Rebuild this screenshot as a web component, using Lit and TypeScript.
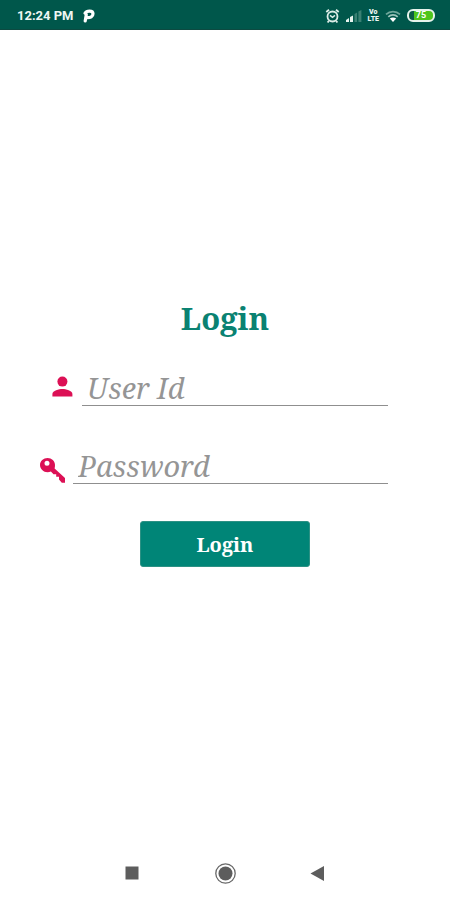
import { LitElement, html, css } from "lit";
import { customElement } from "lit/decorators.js";

@customElement("app-status-bar")
class AppStatusBar extends LitElement {
  static styles = css`
    :host {
      display: flex;
      align-items: center;
      justify-content: space-between;
      height: 30px;
      padding: 2px 15px 0 17px;
      box-sizing: border-box;
      background: #00574b;
      color: #eef6f3;
      font-family: Roboto, sans-serif;
      border-bottom: 1px solid #0c4a41;
    }
    .group {
      display: flex;
      align-items: center;
    }
    .left {
      gap: 8px;
    }
    .right {
      gap: 6px;
    }
    .time {
      font-size: 13px;
      font-weight: 700;
      line-height: 16px;
    }
    .volte {
      display: flex;
      flex-direction: column;
      align-items: center;
      font-size: 7px;
      font-weight: 900;
      line-height: 7px;
    }
    svg {
      display: block;
    }
    .battery {
      display: flex;
      align-items: center;
      justify-content: center;
      width: 28px;
      height: 13px;
      box-sizing: border-box;
      border: 2px solid #e6f3ec;
      border-radius: 6px;
      background: linear-gradient(90deg, #0c5b45 22%, #4fc51c 22%);
      color: #fff;
      font-size: 9px;
      font-weight: 700;
      line-height: 9px;
    }
  `;

  render() {
    return html`
      <div class="group left">
        <span class="time">12:24 PM</span>
        <svg width="14" height="16" viewBox="0 0 14 16" fill="none" stroke="#fff" aria-hidden="true">
          <path d="M3.200 13 4.300 6.500" stroke-width="3.200" stroke-linecap="round" />
          <path d="M3 5.200C4.500 2.500 11 2 11 5.800C11 8.600 8.500 9.700 5 9.600" stroke-width="3.200" stroke-linecap="round" />
        </svg>
      </div>
      <div class="group right">
        <svg width="15" height="16" viewBox="0 0 15 16" fill="none" stroke="#dcece7" aria-hidden="true">
          <circle cx="7.5" cy="8.5" r="5" stroke-width="1.8" />
          <path d="M1.3 4 4 1.8M13.7 4 11 1.8M3.8 13 2.6 14.5M11.2 13l1.2 1.5" stroke-width="1.9" />
          <path d="M5 7.3 7.5 9.3 10 7.3" stroke-width="1.5" />
        </svg>
        <svg width="16" height="14" viewBox="0 0 16 14" aria-hidden="true">
          <path d="M0 13V11l3-2v4z M4 13V8l3-1.6V13z" fill="#e6f3ee" />
          <path d="M8.5 13V5l2.6-1.6V13z M12.4 13V2.6L15.4 1v12z" fill="#3a8073" />
        </svg>
        <span class="volte"><span>Vo</span><span>LTE</span></span>
        <svg width="16" height="12" viewBox="0 0 16 12" fill="none" aria-hidden="true">
          <path d="M1 4.3C5 .6 11 .6 15 4.3" stroke="#6fa79b" stroke-width="1.7" />
          <path d="M3.3 6.8C6 4.3 10 4.3 12.7 6.8" stroke="#9cc4ba" stroke-width="1.7" />
          <path d="M8 12 4.8 8.6C6.6 7 9.4 7 11.2 8.6z" fill="#fff" />
        </svg>
        <span class="battery">75</span>
      </div>
    `;
  }
}

@customElement("app-nav-bar")
class AppNavBar extends LitElement {
  static styles = css`
    :host {
      display: flex;
      align-items: center;
      justify-content: center;
      gap: 69px;
      height: 54px;
    }
    button {
      display: block;
      width: 24px;
      height: 24px;
      padding: 0;
      border: 0;
      background: none;
    }
    svg {
      display: block;
    }
  `;

  render() {
    return html`
      <button aria-label="Recent apps">
        <svg width="24" height="24" viewBox="0 0 24 24"><path d="M5.5 5.5h13v13h-13z" fill="#5d5d5d" /></svg>
      </button>
      <button aria-label="Home">
        <svg width="24" height="24" viewBox="0 0 24 24">
          <circle cx="12.500" cy="12.500" r="9.7" fill="none" stroke="#686868" stroke-width="1.3" />
          <circle cx="12.500" cy="12.500" r="7" fill="#5d5d5d" />
        </svg>
      </button>
      <button aria-label="Back">
        <svg width="24" height="24" viewBox="0 0 24 24"><path d="M4.5 12.500 18 5v15z" fill="#5d5d5d" /></svg>
      </button>
    `;
  }
}

@customElement("app-root")
class AppRoot extends LitElement {
  static styles = css`
    :host {
      display: flex;
      flex-direction: column;
      min-height: 100vh;
      background: #fff;
      font-family: "Noto Serif", "DejaVu Serif Condensed", "DejaVu Serif", serif;
    }
    main {
      flex: 1;
      display: flex;
      flex-direction: column;
      justify-content: center;
      padding: 0 62px 12px 40px;
    }
    h1 {
      margin: 0 -22px 24px 0;
      color: #0a8272;
      font-size: 31px;
      font-weight: 700;
      line-height: 40px;
      text-align: center;
    }
    form {
      display: flex;
      flex-direction: column;
      gap: 34px;
    }
    .field {
      display: flex;
      align-items: flex-end;
      gap: 8px;
      height: 44px;
    }
    .user {
      padding-left: 12px;
    }
    .field svg {
      display: block;
      flex: none;
    }
    input {
      flex: 1;
      min-width: 0;
      height: 44px;
      box-sizing: border-box;
      padding: 8px 5px 0 5px;
      border: 0;
      border-bottom: 1px solid #8f8f8f;
      border-radius: 0;
      outline: 0;
      background: none;
      color: #333;
      font-family: inherit;
      font-size: 29px;
      font-style: italic;
    }
    input::placeholder {
      color: #959595;
      opacity: 1;
    }
    .submit {
      align-self: center;
      width: 170px;
      height: 46px;
      margin: 3px -22px 0 0;
      padding: 2px 0 0;
      border: 1px solid #2c9184;
      border-radius: 3px;
      background: #008577;
      color: #fff;
      font-family: inherit;
      font-size: 20px;
      font-weight: 700;
    }
  `;

  render() {
    return html`
      <app-status-bar></app-status-bar>
      <main>
        <h1>Login</h1>
        <form @submit=${(e: Event) => e.preventDefault()}>
          <div class="field user">
            <svg width="22" height="32" viewBox="0 0 22 32" fill="#dc1055" aria-hidden="true">
              <circle cx="10.4" cy="7.600" r="5" />
              <path d="M.4 22.600V20c0-3.400 6.600-5 10-5s10 1.600 10 5v2.600z" />
            </svg>
            <input type="text" placeholder="User Id" aria-label="User Id" />
          </div>
          <div class="field">
            <svg width="25" height="28" viewBox="0 0 25 28" aria-hidden="true">
              <path
                fill="#dc1055"
                fill-rule="evenodd"
                d="M7.500 2C3.500 2 0 5 0 9s3.500 7.200 7.500 7.200c1.300 0 2.500-.3 3.400-.7l2.600 2.700h2.700v2.600h2.800v2.700l2.800 3.300H25v-4.800L14.600 12.400c.3-1 .4-2 .4-3.400C15 5 11.700 2 7.500 2zM7 4.800a2.500 2.500 0 1 1 0 5 2.500 2.500 0 0 1 0-5z"
              />
            </svg>
            <input type="password" placeholder="Password" aria-label="Password" />
          </div>
          <button class="submit" type="submit">Login</button>
        </form>
      </main>
      <app-nav-bar></app-nav-bar>
    `;
  }
}
